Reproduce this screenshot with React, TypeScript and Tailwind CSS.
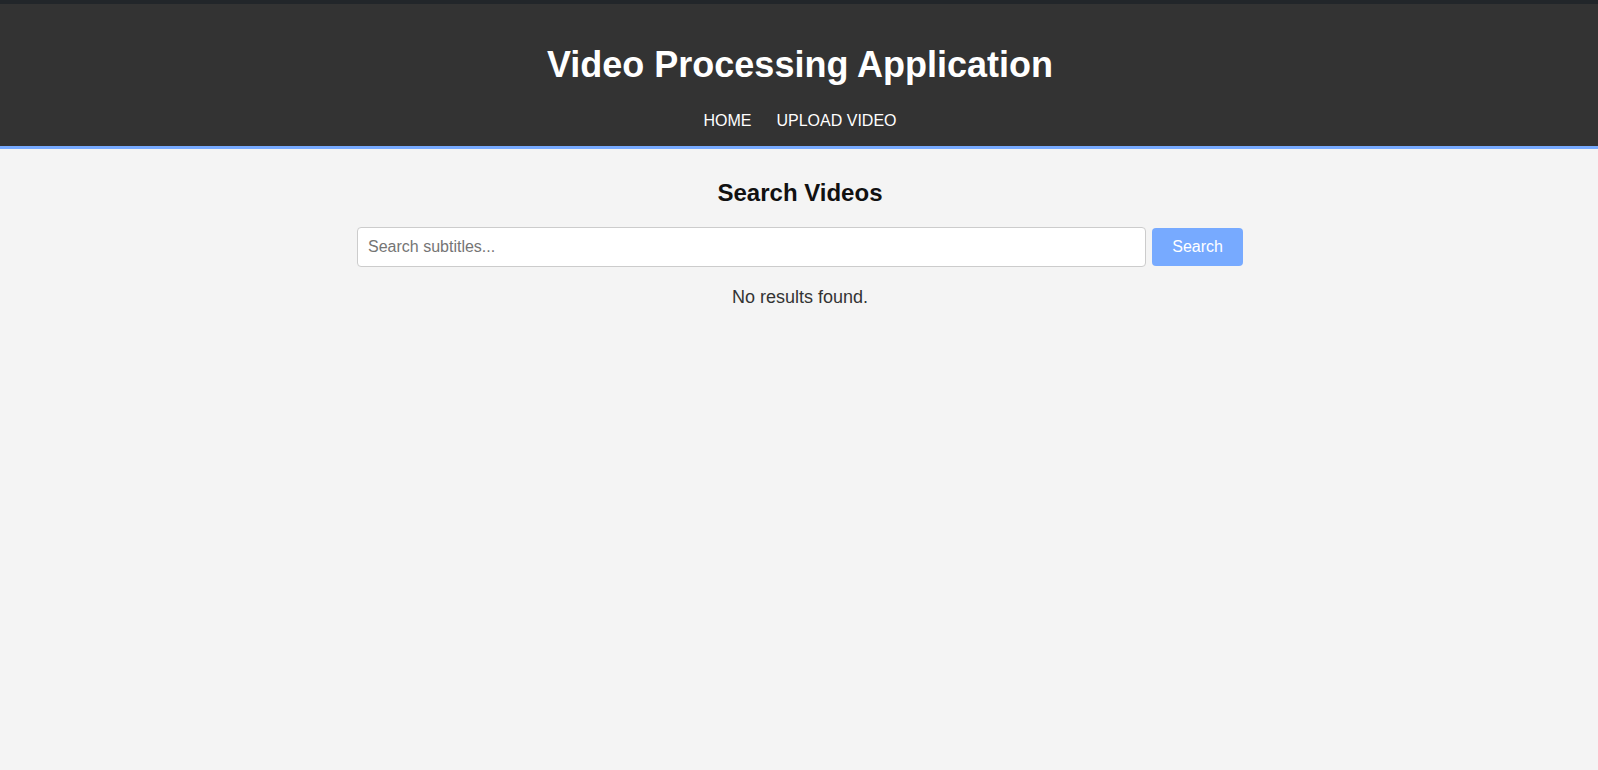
import { useState } from "react";

export default function App() {
  const [query, setQuery] = useState("");

  return (
    <div className="min-h-screen bg-[#f4f4f4] font-['Liberation_Sans',Arial,sans-serif]">
      <div className="h-[4px] bg-[#22262a]" />
      <header className="bg-[#333333] border-b-[3px] border-[#77aaff] text-white text-center pt-[40px] pb-[16px] pl-[2px]">
        <h1 className="mb-[27px] text-[36px] leading-[41px] font-bold">
          Video Processing Application
        </h1>
        <nav className="flex justify-center gap-[25px] text-[16px] leading-[18px]">
          <a href="#">HOME</a>
          <a href="#">UPLOAD VIDEO</a>
        </nav>
      </header>

      <main className="pl-[2px] pt-[30px]">
        <div className="w-[886px] mx-auto text-center">
          <h2 className="text-[24px] leading-[28px] font-bold text-[#111111]">
            Search Videos
          </h2>
          <div className="mt-[20px] flex items-center gap-[6px]">
            <input
              value={query}
              onChange={(e) => setQuery(e.target.value)}
              placeholder="Search subtitles..."
              className="flex-1 h-[40px] px-[10px] text-[16px] bg-white border border-[#cccccc] rounded-[4px] outline-none placeholder:text-[#757575]"
            />
            <button className="h-[38px] px-[20px] text-[16px] text-white bg-[#77aaff] rounded-[4px]">
              Search
            </button>
          </div>
          <p className="mt-[20px] text-[18px] leading-[21px] text-[#333333]">No results found.</p>
        </div>
      </main>
    </div>
  );
}
